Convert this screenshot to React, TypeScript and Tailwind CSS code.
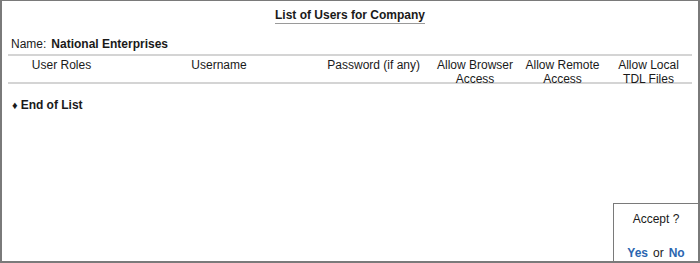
import React from 'react';

const columns = [
  { label: ['User Roles'], w: 'w-[107px]', align: 'text-center' },
  { label: ['Username'], w: 'w-[208px]', align: 'text-center' },
  { label: ['Password (if any)'], w: 'w-[107px]', align: 'text-right pr-[10px]' },
  { label: ['Allow Browser', 'Access'], w: 'w-[90px]', align: 'text-center' },
  { label: ['Allow Remote', 'Access'], w: 'w-[85px]', align: 'text-center' },
  { label: ['Allow Local', 'TDL Files'], w: 'w-[87px]', align: 'text-center' },
];

export default function App() {
  return (
    <div className="relative w-[700px] h-[263px] bg-white border-2 border-t border-[#7a7a7a] font-['Liberation_Sans',Arial,sans-serif] text-[12px] text-[#1a1a1a] overflow-hidden">
      <div className="flex justify-center pt-[7px]">
        <span className="font-bold leading-[14px] border-b border-[#9a9a9a] pb-[1px]">List of Users for Company</span>
      </div>

      <div className="flex items-baseline gap-[5px] pl-[9px] mt-[13px] leading-[14px]">
        <span>Name:</span>
        <span className="font-bold">National Enterprises</span>
      </div>

      <div className="mx-[6px] mt-[3px] border-t-2 border-b-2 border-[#d4d4d4] flex pt-[2px] pb-[2px] h-[30px] leading-[14px]">
        {columns.map((c, i) => (
          <div key={i} className={`${c.w} ${c.align} shrink-0`}>
            {c.label.map((l, j) => (
              <div key={j}>{l}</div>
            ))}
          </div>
        ))}
      </div>

      <div className="flex items-center gap-[3px] pl-[10px] mt-[14px] leading-[14px] font-bold">
        <span className="text-[11px]">♦</span>
        <span>End of List</span>
      </div>

      <div className="absolute right-0 bottom-0 w-[85px] h-[58px] border-l border-t border-[#7a7a7a] bg-white flex flex-col items-center justify-between pt-[8px] pb-[1px] leading-[14px]">
        <span>Accept ?</span>
        <div className="flex gap-[5px]">
          <span className="font-bold text-[#2a66b0]">Yes</span>
          <span>or</span>
          <span className="font-bold text-[#2a66b0]">No</span>
        </div>
      </div>
    </div>
  );
}
